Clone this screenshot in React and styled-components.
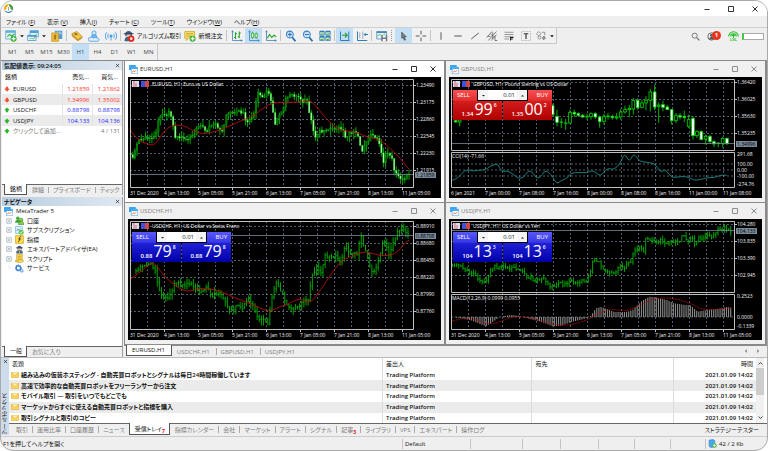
import React from 'react'
import styled, { createGlobalStyle, css } from 'styled-components';

const GlobalStyle = createGlobalStyle`
  * { box-sizing: border-box; }
  body {
    margin: 0;
    background: #fff;
    color: #111;
    font-family: "Open Sans", "Noto Sans CJK JP", sans-serif;
    font-size: 6px;
    line-height: 8px;
    font-feature-settings: "palt";
  }
  button, input {
    font: inherit;
    color: inherit;
    font-feature-settings: inherit;
    padding: 0;
    margin: 0;
    border: 0;
    background: none;
  }
  a { color: inherit; text-decoration: none; }
  svg { display: block; flex: none; }
  table { border-collapse: collapse; }
`;

const Frame = styled.div`
  display: flex;
  flex-direction: column;
  min-height: 100vh;
  border: 1px solid #a9a9a9;
  border-radius: 13px;
  background: #efefef;
  overflow: hidden;
`;

const TitleBar = styled.header`
  display: flex;
  align-items: center;
  justify-content: space-between;
  height: 15px;
  padding: 0 6px 0 2px;
  background: #fff;
`;

const WindowControls = styled.div`
  display: flex;
  gap: ${({ $gap }) => $gap || '12px'};
  color: ${({ $muted }) => ($muted ? '#8c8c8c' : '#333')};
`;

const ControlButton = styled.button`
  display: grid;
  place-items: center;
  width: 12px;
  height: 12px;
`;

const MenuBar = styled.nav`
  display: flex;
  gap: 12px;
  align-items: center;
  height: 12px;
  padding: 0 5px;
  border-bottom: 1px solid #cfcfcf;
`;

const ToolRow = styled.div`
  display: flex;
  justify-content: space-between;
  height: 16px;
`;

const ToolBar = styled.div`
  display: flex;
  align-items: stretch;
  padding-left: 3px;
  border: solid #c8c8c8;
  border-width: 0 1px 1px 0;
  background: #f1f1f1;
`;

const ToolButton = styled.button`
  display: flex;
  align-items: center;
  justify-content: center;
  gap: 2px;
  flex: none;
  width: ${({ $wide }) => $wide || '17px'};
  background: ${({ $active }) => ($active ? '#c3dff5' : 'none')};
  white-space: nowrap;
`;

const Separator = styled.span`
  width: 1px;
  margin: 2px 1px;
  background: #c4c4c4;
`;

const Handle = styled.span`
  width: 3px;
  margin: 2px 1px;
  border-left: 1px dotted #999;
`;

const StatusIcons = styled.div`
  display: flex;
  align-items: center;
  gap: 3px;
  padding-right: 3px;
`;

const Account = styled.button`
  position: relative;
  width: 18px;
`;

const Badge = styled.span`
  position: absolute;
  right: 4px;
  top: -1px;
  width: 9px;
  height: 9px;
  border-radius: 50%;
  background: #e8341c;
  color: #fff;
  font-weight: 700;
`;

const LevelMark = styled.span`
  display: flex;
  flex-direction: column;
  align-items: center;
  color: #25bd25;
  font-size: 4px;
  font-weight: 700;
  line-height: 4px;
  svg { margin-bottom: -4px; }
`;

const Level = styled.span`
  width: 22px;
  height: 7px;
  border: 1px solid #aaa;
  border-left: 2px solid #3ccb3c;
  background: #fff;
`;

const Periods = styled.div`
  display: flex;
  align-self: flex-start;
  height: 16px;
  padding-left: 3px;
  border-right: 1px solid #c8c8c8;
  color: #444;
`;

const Workspace = styled.main`
  display: grid;
  grid-template-columns: 122px minmax(0, 1fr);
  gap: 1px;
  border-top: 1px solid #8a8a8a;
  flex: 1;
`;

const Sidebar = styled.aside`
  display: flex;
  flex-direction: column;
  gap: 2px;
  padding-left: 1px;
`;

const Panel = styled.section`
  display: flex;
  flex-direction: column;
  border-right: 1px solid #a0a0a0;
  flex: ${({ $grow }) => ($grow ? 1 : '0 0 134px')};
`;

const PanelHead = styled.h2`
  display: flex;
  align-items: center;
  justify-content: space-between;
  height: 9px;
  margin: 0;
  padding: 0 2px;
  background: linear-gradient(90deg, #b9cde0, #dfe8f1);
  font-size: 6px;
  font-weight: 600;
`;

const PanelBody = styled.div`
  flex: 1;
  background: #fff;
`;

const Tabs = styled.div`
  display: flex;
  align-items: stretch;
  height: ${({ $height }) => $height || '11px'};
  padding-left: 2px;
  border-top: ${({ $line }) => ($line ? '1px solid #666' : '0')};
  color: #7c7c7c;
`;

const Tab = styled.button`
  position: relative;
  padding: 0 4px 0 5px;
  white-space: nowrap;
  ${({ $active }) => $active ? css`
    background: #fff;
    color: #111;
    border: solid #555;
    border-width: 0 1px 1px;
    margin-top: -1px;
  ` : css`
    & + &::before {
      content: "";
      position: absolute;
      left: 0;
      top: 2px;
      bottom: 2px;
      border-left: 1px solid #aaa;
    }
  `}
`;

const Strategy = styled.button`
  margin-left: auto;
  padding-right: 8px;
  color: #222;
`;

const Count = styled.sub`
  color: #f00;
  font-size: 5px;
  font-weight: 700;
  line-height: 0;
`;

const QuoteTable = styled.table`
  width: 100%;
  table-layout: fixed;
  th { height: 14px; padding: 0 3px; font-weight: 400; text-align: right; }
  th:first-child { width: 60px; text-align: left; }
  th:last-child { padding-right: 4px; }
`;

const Quote = styled.tr`
  height: 10px;
  color: ${({ $color }) => $color || '#777'};
  &:nth-child(even) { height: 11px; background: #ebebeb; }
  td { padding: 0 2px; text-align: right; border-left: 1px solid #e4e4e4; }
  td:first-child { text-align: left; border: 0; }
  &:last-child td { border: 0; }
`;

const Symbol = styled.span`
  display: flex;
  align-items: center;
  gap: ${({ $gap }) => $gap || '3px'};
  color: ${({ $muted }) => ($muted ? '#777' : '#111')};
  white-space: nowrap;
`;

const Tree = styled.ul`
  list-style: none;
  margin: 0;
  padding: 0 2px;
`;

const TreeItem = styled.li`
  display: flex;
  align-items: center;
  gap: 3px;
  height: 10px;
  padding-left: ${({ $root }) => ($root ? '0' : '2px')};
  &:nth-child(even) { height: 9px; }
`;

const Desktop = styled.div`
  display: flex;
  flex-direction: column;
  background: #8a8a8a;
`;

const WindowGrid = styled.div`
  display: grid;
  grid-template-columns: 1fr 1fr;
  gap: 1px 2px;
  padding: 0 2px 2px 1px;
`;

const ChartWindow = styled.section`
  padding: 0 3px 4px;
  background: ${({ $active }) => ($active ? '#fff' : '#f0f0f0')};
`;

const ChartHead = styled.div`
  display: flex;
  align-items: center;
  justify-content: space-between;
  height: 16px;
  padding: 0 2px 0 1px;
  color: ${({ $active }) => ($active ? '#333' : '#808080')};
`;

const ChartName = styled.span`
  display: flex;
  align-items: center;
  gap: 2px;
`;

const ChartBody = styled.div`
  position: relative;
  background: #000;
`;

const ChartSvg = styled.svg`
  width: 100%;
  font-size: 5px;
  fill: #f4f4f4;
`;

const TradePanel = styled.div`
  position: absolute;
  left: 4px;
  top: 13px;
  display: flex;
  gap: 1px;
  color: #fff;
`;

const TradeButton = styled.button`
  display: flex;
  flex-direction: column;
  width: 49px;
  height: 30px;
  padding: 1px 4px;
  align-items: ${({ $right }) => ($right ? 'flex-end' : 'flex-start')};
  background: ${({ $red }) => $red
    ? 'linear-gradient(#fa5050, #e23030 34%, #d41c1c 38%, #b00000)'
    : 'linear-gradient(#5858fa, #3838e6 34%, #2020d8 38%, #0000a8)'};
`;

const TradeLabel = styled.span`
  line-height: 9px;
`;

const TradePrice = styled.span`
  display: flex;
  align-items: flex-end;
  align-self: center;
  gap: 1px;
  padding-left: 3px;
  font-weight: 600;
  b { font-size: 16px; line-height: 18px; font-weight: 400; }
  sup { align-self: flex-start; line-height: 11px; }
`;

const Volume = styled.div`
  position: absolute;
  left: 24px;
  top: 0;
  display: flex;
  width: 51px;
  height: 11px;
  background: #f4f4f4;
  border: solid #000;
  border-width: 0 1px 1px;
  color: #222;
  button { width: 10px; display: grid; place-items: center; }
  input { width: 29px; background: #fff; text-align: right; padding-right: 2px; }
`;

const MdiTabs = styled(Tabs)`
  flex: 1;
  background: #efefef;
  align-items: flex-start;
  ${Tab} { height: 11px; padding: 0 6px 0 5px; }
`;

const Arrows = styled.span`
  display: flex;
  gap: 6px;
  margin: 2px 6px 0 auto;
`;

const Toolbox = styled.section`
  display: grid;
  grid-template-columns: 8px minmax(0, 1fr);
  border-top: 1px solid #bbb;
`;

const ToolboxStrip = styled.div`
  display: flex;
  flex-direction: column;
  align-items: center;
  justify-content: space-between;
  padding-top: 1px;
  background: #cddceb;
  span { writing-mode: vertical-rl; transform: rotate(180deg); line-height: 8px; }
`;

const MailArea = styled.div`
  display: flex;
  height: 65px;
  overflow: hidden;
  background: #fff;
`;

const MailTable = styled.table`
  flex: 1;
  width: 100%;
  table-layout: fixed;
  th, td { padding: 0 3px; text-align: left; white-space: nowrap; overflow: hidden; border-left: 1px solid #dcdcdc; }
  th:first-child, td:first-child { border: 0; }
  th:last-child, td:last-child { text-align: right; }
  th { height: 12px; font-weight: 400; }
  td:first-child { padding-left: 2px; }
`;

const Mail = styled.tr`
  height: 10px;
  font-weight: 600;
  &:nth-child(even) { height: 11px; background: #ebebeb; }
`;

const Scrollbar = styled.div`
  display: flex;
  flex-direction: column;
  justify-content: space-between;
  align-items: center;
  width: 8px;
  margin-right: 3px;
  padding: 3px 0;
  background: #f1f1f1;
`;

const Thumb = styled.span`
  width: 8px;
  height: 27px;
  margin: 2px 0 auto;
  background: #cdcdcd;
`;

const StatusBar = styled.footer`
  display: flex;
  align-items: center;
  height: 14px;
  margin-top: 1px;
  border-top: 1px solid #ccc;
`;

const StatusCell = styled.span`
  display: flex;
  align-items: center;
  gap: 2px;
  width: ${({ $width }) => $width};
  flex: ${({ $width }) => ($width ? 'none' : 1)};
  height: 10px;
  padding-left: 2px;
  border-left: ${({ $first }) => ($first ? '0' : '1px solid #c4c4c4')};
`;

// all icons are drawn on a 16 unit square
const icons = {
  logo: <>
    <path d="M8 1a7 7 0 0 0-6 10l4-3 2-7z" fill="#f2b21b" />
    <path d="M8 1a7 7 0 0 1 6 10l-4-3z" fill="#4c9c45" />
    <path d="M2 11a7 7 0 0 0 12 0L8 13z" fill="#2773b8" />
    <path d="M8 4l3 3-1 5H6L5 7z" fill="#fff" />
    <path d="M8 6v5" stroke="#777" />
  </>,
  chart: <>
    <rect x="0" y="0" width="12" height="9" rx="1" fill="#3aa6f0" />
    <rect x="4" y="4" width="11.500" height="11.500" rx="1" fill="#fff" stroke="#2f94e0" />
    <path d="M4 4h11.500v3H4z" fill="#3aa6f0" />
    <path d="M6 13l2-3 2 2 3-3" stroke="#ed6b35" fill="none" strokeWidth="1.600" />
  </>,
  newChart: <>
    <rect x="1" y="1" width="13" height="11" fill="#dff2fb" stroke="#5ba7cf" />
    <path d="M1 1h13v2.500H1z" fill="#5cb2de" />
    <path d="M3 9l3-3 3 2 4-3" stroke="#3caa3c" fill="none" strokeWidth="1.400" />
    <circle cx="11.500" cy="11.500" r="4" fill="#3bb536" />
    <path d="M11.500 9v5M9 11.500h5" stroke="#fff" strokeWidth="1.600" />
  </>,
  profiles: <>
    <rect x="4" y="1" width="11" height="8" fill="#e6f4fc" stroke="#4a9fd4" />
    <path d="M4 1h11v3H4z" fill="#4a9fd4" />
    <rect x="1" y="7" width="11" height="7" fill="#f2faff" stroke="#3f92c9" />
    <path d="M1 7h11v2H1z" fill="#3f92c9" />
    <path d="M3 12l3-1 3 1 4-7" stroke="#39a84a" fill="none" />
  </>,
  money: <>
    <path d="M5 1h10v11H5z" fill="#4d9ed8" />
    <path d="M6 3h8M6 5h8" stroke="#cbe6f8" />
    <path d="M1 4h9v11H1z" fill="#f1bf3d" stroke="#c88f17" />
    <path d="M7.500 7.500c-4-1-4 2-2 2s2 2.500-2 1.500M5.500 6v7" stroke="#8b5f08" fill="none" />
  </>,
  book: <>
    <path d="M1 5l7-3 7 7-6 4z" fill="#f3c64a" stroke="#b9871b" />
    <path d="M1 5v3l8 7 6-4V9l-6 4z" fill="#c4912a" />
    <path d="M4 5l3-1 2 2-3 1z" fill="#8a6210" />
  </>,
  cloud: <>
    <circle cx="8" cy="4" r="2.800" fill="#cfe7fd" stroke="#3e95e2" />
    <path d="M5 7h6l1 4H4z" fill="#7dbdf8" stroke="#3e95e2" />
    <path d="M3 15a2 2 0 0 1 0-5c2-1 3 0 4 1 2-2 5-1 5 0 4 0 3 4 1 4z" fill="#ddeefd" stroke="#3e95e2" />
  </>,
  signal: <g fill="none" stroke="#4d9ee3" strokeWidth="1.300">
    <circle cx="8" cy="8" r="1.500" fill="#2f7bc8" />
    <path d="M5 5a4 4 0 0 0 0 6M11 5a4 4 0 0 1 0 6M2.500 3a7 7 0 0 0 0 10M13.500 3a7 7 0 0 1 0 10" />
    <path d="M8 10v4" />
  </g>,
  algo: <>
    <path d="M3 5c0-5 9-5 9 0v3H3z" fill="#3d5a80" />
    <path d="M1 5h13" stroke="#2c3e55" strokeWidth="1.500" />
    <path d="M2 15c0-5 3-7 6-6l4 6z" fill="#48617f" />
    <path d="M5 6h5v3H5z" fill="#f0c79a" />
    <circle cx="11" cy="11.500" r="4.200" fill="#dd2b22" />
    <path d="M9.500 10h3v3h-3z" fill="#fff" />
  </>,
  order: <>
    <path d="M1 2h13v9H6l-3 3v-3H1z" fill="#f7dd69" stroke="#c9a227" />
    <path d="M3 5h9M3 8h7" stroke="#b38e20" />
    <circle cx="11.500" cy="11.500" r="4" fill="#3bb536" />
    <path d="M11.500 9v5M9 11.500h5" stroke="#fff" strokeWidth="1.600" />
  </>,
  bars: <>
    <path d="M2 1v13h13M1 3l1-2 1 2M13 13l2 1-2 1" stroke="#3478b8" fill="none" />
    <path d="M6 3v9M4 10h2M6 5h2M11 2v9M9 9h2M11 4h2" stroke="#26a62a" strokeWidth="1.500" />
  </>,
  candles: <>
    <path d="M2 1v13h13M1 3l1-2 1 2M13 13l2 1-2 1" stroke="#3478b8" fill="none" />
    <path d="M6 2v10M11 3v9" stroke="#26a62a" />
    <path d="M4.500 4h3v6h-3zM9.500 5h3v5h-3z" fill="#d9f7d9" stroke="#26a62a" />
  </>,
  line: <>
    <path d="M2 1v13h13M1 3l1-2 1 2M13 13l2 1-2 1" stroke="#3478b8" fill="none" />
    <path d="M3 11l3-5 3 4 3-3 3 2" stroke="#26a62a" fill="none" strokeWidth="1.500" />
  </>,
  zoomIn: <>
    <path d="M9 9l5 6" stroke="#2b6cb0" strokeWidth="2.500" />
    <circle cx="6.500" cy="6" r="4.500" fill="#c6e2fc" stroke="#3b82c8" strokeWidth="1.400" />
    <path d="M4 6h5M6.500 3.500v5" stroke="#2b6cb0" strokeWidth="1.300" />
  </>,
  zoomOut: <>
    <path d="M9 9l5 6" stroke="#2b6cb0" strokeWidth="2.500" />
    <circle cx="6.500" cy="6" r="4.500" fill="#c6e2fc" stroke="#3b82c8" strokeWidth="1.400" />
    <path d="M4 6h5" stroke="#2b6cb0" strokeWidth="1.300" />
  </>,
  tile: <>
    <path d="M1 2h6v5H1zM9 2h6v5H9zM1 9h6v5H1zM9 9h6v5H9z" fill="#d5f2cf" stroke="#2e79b9" />
    <path d="M1 2h6M9 2h6M1 9h6M9 9h6" stroke="#2e79b9" strokeWidth="2" />
    <path d="M2 6l4-1M10 6l4-1M2 13l4-1M10 13l4-1" stroke="#35ab35" strokeWidth="1.300" />
  </>,
  scroll: <>
    <path d="M2 2v12h12M13 2v12" stroke="#2e79b9" fill="none" strokeWidth="1.300" />
    <path d="M4 7h7M8 4l3 3-3 3" stroke="#2aa12e" fill="none" strokeWidth="1.500" />
  </>,
  shift: <>
    <path d="M2 2v12h13" stroke="#2e79b9" fill="none" strokeWidth="1.300" />
    <path d="M5 3v8M9 2v10" stroke="#7e9ab3" />
    <path d="M11 6h5M13 4l-2 2 2 2" stroke="#2e79b9" fill="none" strokeWidth="1.300" />
  </>,
  template: <>
    <path d="M1 2h13v10H1z" fill="#e6f3fa" stroke="#4288ba" />
    <path d="M1 3h13" stroke="#4288ba" strokeWidth="2" />
    <path d="M2 8l3-2 3 2 4-3" stroke="#35ab35" fill="none" />
    <path d="M7 7h8v8H7z" fill="#6b7683" />
    <path d="M9 7h4v3H9zM9 12h4v3H9z" fill="#fff" />
  </>,
  cursor: <path d="M5 3l6 6H8l2 4-1.500.6L6.500 9.500 5 11z" fill="#888" stroke="#444" />,
  cross: <path d="M8 1v5M8 10v5M1 8h5M10 8h5" stroke="#555" strokeWidth="1.300" />,
  vline: <path d="M8 3v10" stroke="#555" strokeWidth="1.300" />,
  hline: <path d="M3 8h10" stroke="#555" strokeWidth="1.300" />,
  trend: <path d="M3 12l10-8" stroke="#555" strokeWidth="1.300" />,
  channel: <path d="M1 10l7-8M3 14l11-12M7 14l7-8M2 8l4 1M6 5l4 4M9 3v9M12 8v6h3" stroke="#555" fill="none" />,
  fibo: <>
    <path d="M2 3h12M2 6h12M2 9h12M2 12h6" stroke="#777" />
    <path d="M10 9v5M10 10h4M10 12h3" stroke="#222" fill="none" strokeWidth="1.400" />
  </>,
  text: <>
    <path d="M2 2h12v12H2z" fill="none" stroke="#999" strokeDasharray="1 1" />
    <path d="M5 5h6M8 5v7" stroke="#333" strokeWidth="1.600" />
  </>,
  shapes: <g stroke="#777">
    <path d="M2 5l3-3 3 3-3 3zM9 3h4v4" fill="none" />
    <circle cx="6" cy="10" r="2" fill="none" />
    <path d="M10 10l2-2 2 3-3 2z" fill="#999" />
  </g>,
  search: <g fill="none" stroke="#666">
    <circle cx="6.500" cy="6.500" r="4.500" strokeWidth="1.500" />
    <path d="M10 10l5 5" strokeWidth="2" />
  </g>,
  user: <>
    <circle cx="8" cy="8" r="6.500" fill="#eee" stroke="#555" strokeWidth="1.500" />
    <circle cx="8" cy="6" r="2.500" fill="#555" />
    <path d="M4 12c1-4 7-4 8 0-2 2-6 2-8 0z" fill="#555" />
  </>,
  level: <g fill="none" stroke="#25bd25" strokeWidth="1.600">
    <path d="M1 8a7 7 0 0 1 14 0M4 8a4 4 0 0 1 8 0" />
    <path d="M8 10V5M6 7l2-2 2 2" />
  </g>,
  down: <path d="M8 15L1 8l4-2V2h6v4l4 2z" fill="#f4542f" />,
  up: <path d="M8 1l7 7-4 2v4H5v-4L1 8z" fill="#2db62c" />,
  accounts: <>
    <circle cx="5" cy="4" r="3" fill="#3aa635" />
    <path d="M0 12c0-7 10-7 10 0z" fill="#3aa635" />
    <circle cx="11" cy="7" r="3" fill="#8ed04b" stroke="#2b7b27" />
    <path d="M6 15c0-7 10-7 10 0z" fill="#8ed04b" stroke="#2b7b27" />
  </>,
  subscribe: <>
    <path d="M1 1h12v12H1z" fill="#e3f4fd" stroke="#4ba3d8" />
    <path d="M3 9l2-4 2 3 3-4" stroke="#3478b8" fill="none" />
    <circle cx="11" cy="11" r="4.500" fill="#5cc552" />
    <path d="M8.500 11l2 2 3-4" stroke="#fff" fill="none" strokeWidth="1.400" />
  </>,
  indicator: <>
    <path d="M1 1h14v14H1z" fill="#ffd94a" stroke="#c2940f" />
    <path d="M11 3c-3-1-3 2-3 4s-1 6-3 5M6 7h5" stroke="#333" fill="none" strokeWidth="1.400" />
  </>,
  expert: <>
    <path d="M4 5c0-5 8-5 8 0v3H4z" fill="#3d5a80" />
    <path d="M2 5h12" stroke="#2c3e55" strokeWidth="1.500" />
    <path d="M5 6h6v3H5z" fill="#f0c79a" />
    <path d="M2 15c0-5 3-6 6-6s6 1 6 6z" fill="#48617f" />
    <path d="M8 10v4" stroke="#f3c64a" strokeWidth="1.500" />
  </>,
  script: <>
    <path d="M3 1h10v9H6v4H1v-3h2z" fill="#f8d558" stroke="#c2940f" />
    <path d="M5 4h6M5 7h6" stroke="#b38e20" />
    <path d="M6 11h9c0 3-1 4-3 4H5c1-1 1-2 1-4z" fill="#ffe68a" stroke="#c2940f" />
  </>,
  service: <>
    <circle cx="6" cy="7" r="4" fill="none" stroke="#3e83d0" strokeWidth="2.500" />
    <circle cx="6" cy="7" r="5.500" fill="none" stroke="#3e83d0" strokeDasharray="2 2" strokeWidth="1.500" />
    <circle cx="12" cy="12" r="2.300" fill="none" stroke="#6fa7e4" strokeWidth="2" />
  </>,
  mail: <>
    <path d="M1 3h14v10H1z" fill="#fbd55c" stroke="#d9a324" />
    <path d="M1 3l7 6 7-6" fill="#fff2b8" stroke="#d9a324" />
  </>,
  link: <>
    <path d="M2 2l7-1 3 2v11l-7 1-3-2z" fill="#4aa8ee" stroke="#2377bd" />
    <circle cx="11.500" cy="11.500" r="4" fill="#58b947" />
    <path d="M11.500 9v5M9 11.500h5" stroke="#fff" strokeWidth="1.400" />
  </>,
  plus: <path d="M2 2h12v12H2zM5 8h6M8 5v6" stroke="#7d8ea3" fill="#fff" strokeWidth="1.500" />,
  branch: <path d="M8-4V8h8" stroke="#aaa" fill="none" strokeDasharray="2 2" />,
  minimize: <path d="M3 9h10" stroke="currentColor" strokeWidth="2" />,
  maximize: <path d="M3 3h10v10H3z" stroke="currentColor" fill="none" strokeWidth="2" />,
  close: <path d="M3 3l10 10M13 3L3 13" stroke="currentColor" strokeWidth="2" />,
  caretDown: <path d="M3 6h10l-5 5z" fill="currentColor" />,
  caretUp: <path d="M3 11h10L8 6z" fill="currentColor" />,
  caretLeft: <path d="M10 3v10L5 8z" fill="currentColor" />,
  caretRight: <path d="M6 3v10l5-5z" fill="currentColor" />,
  chevronUp: <path d="M2 11l6-6 6 6" stroke="currentColor" fill="none" strokeWidth="2.500" />,
  chevronDown: <path d="M2 5l6 6 6-6" stroke="currentColor" fill="none" strokeWidth="2.500" />,
};

const Icon = ({ name, size = 12 }) => (
  <svg width={size} height={size} viewBox="0 0 16 16" aria-hidden="true">{icons[name]}</svg>
);

const menus = [['ファイル ', 'F'], ['表示 ', 'V'], ['挿入', 'I'], ['チャート ', 'C'], ['ツール', 'T'], ['ウインドウ', 'W'], ['ヘルプ', 'H']];
const periods = ['M1', 'M5', 'M15', 'M30', 'H1', 'H4', 'D1', 'W1', 'MN'];

const tools = [
  ['newChart', 'caret'], ['profiles', 'caret'], ['money'], '|',
  ['book'], ['cloud'], ['signal'], '|',
  ['algo', 'アルゴリズム取引', '60px'], ['order', '新規注文', '43px'], '|',
  ['bars'], ['candles', 'on'], ['line'], '|',
  ['zoomIn'], ['zoomOut'], ['tile'], '|',
  ['scroll', 'on'], ['shift'], '|', ['template'], ':',
  ['cursor', 'on'], ['cross'], '|',
  ['vline'], ['hline'], ['trend'], ['channel'], ['fibo'], ['text'], ['shapes', 'caret'],
];

const quotes = [
  ['EURUSD', '1.21859', '1.21862', false],
  ['GBPUSD', '1.34996', '1.35002', false],
  ['USDCHF', '0.88798', '0.88798', true],
  ['USDJPY', '104.133', '104.136', true],
];

const tree = [
  ['accounts', '口座'], ['subscribe', 'サブスクリプション'], ['indicator', '指標'],
  ['expert', 'エキスパートアドバイザ(EA)'], ['script', 'スクリプト'], ['service', 'サービス'],
];

const mails = [
  '組み込みの仮装ホスティング - 自動売買ロボットとシグナルは毎日24時間稼働しています',
  '高速で効率的な自動売買ロボットをフリーランサーから注文',
  'モバイル取引 — 取引をいつでもどこでも',
  'マーケットからすぐに使える自動売買ロボットと指標を購入',
  '取引シグナルと取引のコピー',
];

const toolboxTabs = [
  ['取引'], ['運用比率'], ['口座履歴'], ['ニュース'], ['受信トレイ', 7], ['指標カレンダー'], ['会社'], ['マーケット'],
  ['アラート'], ['シグナル'], ['記事', 3], ['ライブラリ'], ['VPS'], ['エキスパート'], ['操作ログ'],
];

// chart series are stored in thirds of a chart unit, as "x,y x,y ..."
const parse = (s, left) => s.split(' ').map((p) => {
  const [x, y] = p.split(',').map(Number);
  return [(x - left) / 3, (y - 52) / 3];
});

const at = (pts, x) => {
  const i = pts.findIndex((p) => p[0] >= x);
  if (i < 1) return i === 0 ? pts[0][1] : pts[pts.length - 1][1];
  const [x0, y0] = pts[i - 1];
  const [x1, y1] = pts[i];
  return y0 + ((y1 - y0) * (x - x0)) / (x1 - x0);
};

const noise = (n) => {
  const v = Math.sin(n * 127.1) * 43758.5453;
  return v - Math.floor(v);
};

// quadratic curve through the middle of each segment
const smooth = (pts) => {
  const last = pts.length - 1;
  let d = `M${pts[0]}`;
  for (let i = 1; i < last; i += 1) {
    const [x, y] = pts[i];
    d += ` Q${x} ${y} ${(x + pts[i + 1][0]) / 2} ${(y + pts[i + 1][1]) / 2}`;
  }
  return `${d} L${pts[last]}`;
};

const STEP = 2.125;

const Bars = ({ data, left, candles, wick = 4 }) => {
  const pts = parse(data, left);
  const items = [];
  let open = pts[0][1];
  let i = 0;
  for (let x = pts[0][0]; x <= pts[pts.length - 1][0] + 0.5; x += STEP) {
    const close = at(pts, x) + (noise(i + 3) - 0.5) * 4;
    const high = Math.min(open, close) - noise(i + 50) * wick;
    const low = Math.max(open, close) + noise(i + 90) * wick;
    items.push({ x, open, close, high, low });
    open = close;
    i += 1;
  }
  return items.map(({ x, open: o, close: c, high, low }) => (
    <g key={x}>
      <path d={`M${x} ${high}V${low}`} stroke="#00b400" strokeWidth="0.9" />
      {candles
        ? <rect x={x - 0.8} y={Math.min(o, c)} width="1.6" height={Math.max(0.6, Math.abs(o - c))} fill={c > o ? '#a5f5a5' : '#006a00'} stroke="#00b400" strokeWidth="0.3" />
        : <path d={`M${x - 1} ${o}H${x}M${x} ${c}H${x + 1}`} stroke="#00b400" strokeWidth="0.7" />}
    </g>
  ));
};

const Curve = ({ data, left, color = '#b80c0c', dash }) => (
  <path d={smooth(parse(data, left))} stroke={color} strokeWidth="0.9" strokeDasharray={dash} fill="none" />
);

const Histogram = ({ data, left }) => {
  const pts = parse(data, left);
  const zero = 98;
  let d = '';
  for (let x = pts[0][0]; x < 283; x += STEP) d += `M${x} ${zero}V${at(pts, x)}`;
  return <path d={d} stroke="#8a8a8a" strokeWidth="1.1" />;
};

// x, high, low, body top, body bottom, falling
const poundCandles = [
  [34, 180, 188, 183, 187, 1], [46, 180, 200, 181, 187, 0],
  [325, 132, 168, 138, 165, 1], [338, 150, 200, 170, 188, 1], [351, 175, 205, 187, 188, 0], [364, 178, 210, 190, 191, 0],
  [377, 150, 192, 158, 190, 0], [390, 150, 172, 158, 163, 1], [402, 158, 172, 162, 167, 1], [415, 163, 174, 167, 172, 1],
  [428, 162, 180, 171, 172, 0], [440, 158, 180, 162, 171, 0], [453, 158, 178, 162, 172, 1], [466, 168, 204, 172, 186, 1],
  [479, 162, 195, 170, 185, 0], [491, 160, 180, 169, 171, 0], [504, 165, 180, 170, 174, 1], [517, 160, 180, 172, 175, 0],
  [529, 148, 180, 157, 172, 0], [542, 138, 162, 150, 157, 0], [555, 136, 172, 146, 150, 0], [567, 115, 165, 122, 148, 0],
  [580, 116, 150, 122, 144, 1], [593, 120, 146, 130, 143, 0], [605, 110, 152, 122, 130, 0], [618, 88, 155, 97, 122, 0],
  [631, 75, 152, 97, 142, 1], [643, 128, 190, 136, 140, 0], [656, 123, 155, 135, 143, 1], [669, 136, 150, 142, 150, 1],
  [682, 148, 195, 150, 183, 1], [695, 160, 190, 168, 183, 0], [707, 160, 180, 168, 172, 1], [720, 153, 188, 170, 174, 1],
  [733, 165, 205, 180, 200, 0], [746, 170, 240, 176, 228, 1], [758, 212, 235, 216, 228, 0], [771, 212, 242, 216, 240, 1],
  [784, 225, 255, 230, 238, 0], [797, 226, 252, 230, 246, 1], [809, 240, 262, 246, 253, 1], [822, 248, 262, 250, 252, 0],
  [835, 232, 264, 236, 251, 0], [848, 234, 256, 236, 252, 1],
];

const PoundCandles = () => poundCandles.map(([x, h, l, t, b, down]) => (
  <g key={x} transform="translate(-4.667 -17.333) scale(0.3333)" stroke="#00d200" strokeWidth="2.500">
    <path d={`M${x} ${h}V${l}`} />
    <rect x={x - 4} y={t} width="8" height={b - t} fill={down ? '#fff' : '#000'} />
  </g>
));

const decemberDates = ['31 Dec 2020', '4 Jan 13:00', '5 Jan 05:00', '5 Jan 21:00', '6 Jan 13:00', '7 Jan 05:00', '7 Jan 21:00', '8 Jan 13:00', '11 Jan 05:00'];
const januaryDates = ['6 Jan 2021', '7 Jan 00:00', '7 Jan 08:00', '7 Jan 16:00', '8 Jan 00:00', '8 Jan 08:00', '8 Jan 16:00', '11 Jan 00:00', '11 Jan 08:00'];

const charts = [
  {
    name: 'EURUSD,H1', title: 'EURUSD, H1:  Euro vs US Dollar', active: true, dates: decemberDates,
    prices: ['1.23490', '1.23175', '1.22860', '1.22545', '1.22230', '1.21915'], first: 8, current: ['1.21859', 97],
    draw: <>
      <Bars left={18} candles wick={6} data="26,282 34,292 42,260 50,240 60,245 75,235 90,238 102,215 110,180 120,160 135,165 143,155 150,185 158,228 175,235 190,240 205,235 215,228 225,205 240,203 255,215 268,195 280,190 292,210 300,215 310,180 316,158 330,162 350,158 362,155 375,190 388,170 395,160 403,120 407,95 415,110 428,105 437,90 443,110 452,155 460,195 470,170 485,140 492,115 510,100 525,112 545,125 555,125 563,160 572,205 582,238 595,210 605,218 625,210 645,205 665,210 672,240 682,220 700,215 710,230 718,285 730,250 745,225 755,225 765,240 775,260 783,320 790,290 800,280 810,300 818,340 830,350 843,362 852,350 862,338" />
      <Curve left={18} data="24,210 45,240 75,253 92,257 105,248 125,215 148,197 180,196 205,208 230,221 260,222 310,205 370,178 400,165 440,132 480,127 530,129 555,120 575,130 610,175 650,213 700,215 740,235 770,237 800,262 830,290 862,330" />
    </>,
  },
  {
    name: 'GBPUSD,H1', title: 'GBPUSD, H1:  Pound Sterling vs US Dollar', dates: januaryDates, red: true,
    prices: ['1.36420', '1.36025', '1.35630', '1.35235'], first: 5, current: ['1.34996', 66],
    sell: ['1.34', '99', '6'], buy: ['1.35', '00', '2'],
    indicator: 'CCI(14) -71.66', levels: [87, 93, 99], marks: [['291.68', 77], ['100.00', 87], ['0.00', 93], ['-100.00', 99], ['-274.76', 107]],
    draw: <>
      <PoundCandles />
      <Curve left={14} color="#1f8a8a" data="22,362 32,360 45,350 60,333 75,330 85,335 105,331 125,331 135,320 150,315 160,312 172,336 185,334 195,336 210,347 222,356 237,355 250,335 262,334 275,355 288,354 300,334 312,336 325,352 338,374 350,362 365,358 378,343 390,338 430,340 440,332 455,338 467,350 480,337 492,325 505,330 518,322 528,310 541,280 555,308 568,280 583,302 595,307 632,310 645,335 655,335 665,330 682,356 707,350 735,352 747,362 770,360 785,354 810,354 830,346 847,347" />
    </>,
  },
  {
    name: 'USDCHF,H1', title: 'USDCHF, H1:  US Dollar vs Swiss Franc', dates: decemberDates,
    prices: ['0.88910', '0.88680', '0.88450', '0.88220', '0.87990', '0.87760'], first: 7, current: ['0.88798', 16],
    sell: ['0.88', '79', '8'], buy: ['0.88', '79', '8'],
    draw: <>
      <Bars left={18} wick={6} data="42,205 55,195 70,192 85,190 98,200 108,255 120,280 135,290 148,270 158,245 175,248 190,252 210,245 225,270 245,270 255,260 270,285 290,270 305,290 318,318 335,320 350,312 362,325 375,290 390,305 400,330 410,350 425,352 437,365 445,310 460,245 475,265 490,300 510,325 520,315 545,300 560,290 570,225 582,195 598,215 610,160 625,170 640,165 655,180 670,135 685,155 705,155 717,100 727,140 738,175 752,215 765,195 780,130 790,125 800,165 815,120 828,90 840,80 852,90 862,105" />
      <Curve left={18} data="24,233 50,215 88,183 100,187 130,228 165,255 195,272 225,260 260,260 300,270 340,290 385,305 440,332 480,312 500,307 530,290 545,296 565,306 600,260 650,182 690,162 732,147 770,163 820,160 850,122 862,115" />
    </>,
  },
  {
    name: 'USDJPY,H1', title: 'USDJPY, H1:  US Dollar vs Yen', dates: decemberDates,
    prices: ['104.280', '103.835', '103.390', '102.945'], first: 5, current: ['104.133', 11],
    sell: ['104', '13', '3'], buy: ['104', '13', '6'],
    indicator: 'MACD(12,26,9) 0.0999 0.0955', levels: [98], marks: [['0.2523', 77], ['0.0000', 98], ['-0.1339', 107]],
    draw: <>
      <Bars left={14} wick={4} data="24,188 45,190 60,210 80,215 95,218 110,242 125,235 140,205 155,195 180,198 215,200 230,212 250,228 275,235 300,228 312,250 330,255 345,245 360,250 375,235 400,242 425,235 435,220 445,185 455,175 470,192 490,212 510,210 525,195 545,195 560,175 572,145 585,138 597,150 605,110 620,120 650,118 665,125 680,118 705,120 715,100 730,118 742,105 750,130 760,110 775,115 790,100 805,108 820,85 840,80 862,87" />
      <Histogram left={14} data="24,346 50,350 80,356 125,374 150,358 165,346 200,340 225,343 250,350 290,360 325,374 350,372 385,360 420,352 440,342 455,320 470,316 495,325 510,331 545,331 565,325 590,300 615,285 635,287 665,294 690,305 740,312 760,330 790,325 830,320 850,315 862,320" />
      <Curve left={14} dash="2 1" data="24,358 60,348 90,352 130,368 165,362 200,345 240,345 290,356 340,372 380,370 430,355 460,335 500,322 540,328 570,320 610,298 645,288 690,290 740,305 770,324 820,324 862,318" />
    </>,
  },
];

const Controls = ({ muted, gap }) => (
  <WindowControls $muted={muted} $gap={gap}>
    <ControlButton aria-label="最小化"><Icon name="minimize" size={8} /></ControlButton>
    <ControlButton aria-label="最大化"><Icon name="maximize" size={8} /></ControlButton>
    <ControlButton aria-label="閉じる"><Icon name="close" size={8} /></ControlButton>
  </WindowControls>
);

const Chart = ({ chart }) => {
  const { title, prices, first, current, dates, indicator, levels = [], marks = [], draw } = chart;
  const bottom = indicator ? 73 : 110;
  const columns = Array.from({ length: 16 }, (_, i) => 19.5 + i * 17);
  return (
    <ChartSvg viewBox="0 0 313 121" role="img" aria-label={title}>
      <g stroke="#66778a" strokeWidth="0.8" strokeDasharray="2 2">
        {columns.map((x) => <path key={x} d={`M${x} 2V110`} />)}
        {prices.map((p, i) => <path key={p} d={`M2 ${first + 0.5 + i * 17}H285`} />)}
        {levels.map((y) => <path key={y} d={`M2 ${y}H285`} />)}
      </g>
      {draw}
      <path d={`M2 ${current[1] + 0.5}H285`} stroke="#778899" strokeWidth="0.8" />
      <g stroke="#c0c0c0" fill="none">
        <path d={`M2.5 2.5H285.5V${bottom + 0.5}H2.500z`} />
        {indicator && <path d="M2.500 75.500H285.500V110.500H2.500z" />}
        {dates.slice(1).map((d, i) => <path key={d} d={`M${36.5 + i * 34} 110v3`} />)}
        {prices.map((p, i) => <path key={p} d={`M285 ${first + 0.5 + i * 17}h3`} />)}
      </g>
      <rect x="4" y="4" width="7" height="6" fill="#d7dcf2" />
      <path d="M6 4v6M8 6v4" stroke="#d66" />
      <rect x="13" y="4" width="4" height="6" fill="#3e50dc" />
      <rect x="17" y="4" width="4" height="6" fill="#d04545" />
      <text x="24" y="9" fill="#fff">{title}</text>
      {indicator && <text x="3" y="81">{indicator}</text>}
      {prices.map((p, i) => <text key={p} x="288" y={first + 2 + i * 17}>{p}</text>)}
      {marks.map(([label, y]) => <text key={label} x="288" y={y + 2}>{label}</text>)}
      <rect x="287" y={current[1] - 2} width="21" height="6" fill="#778899" />
      <text x="288" y={current[1] + 3} fill="#000">{current[0]}</text>
      {dates.map((d, i) => <text key={d} x={2 + i * 34} y="118">{d}</text>)}
    </ChartSvg>
  );
};

const Trade = ({ chart }) => (
  <TradePanel>
    <TradeButton $red={chart.red}>
      <TradeLabel>SELL</TradeLabel>
      <TradePrice>{chart.sell[0]}<b>{chart.sell[1]}</b><sup>{chart.sell[2]}</sup></TradePrice>
    </TradeButton>
    <TradeButton $red={chart.red} $right>
      <TradeLabel>BUY</TradeLabel>
      <TradePrice>{chart.buy[0]}<b>{chart.buy[1]}</b><sup>{chart.buy[2]}</sup></TradePrice>
    </TradeButton>
    <Volume>
      <button aria-label="減らす"><Icon name="caretDown" size={5} /></button>
      <input type="text" defaultValue="0.01" aria-label="数量" />
      <button aria-label="増やす"><Icon name="caretUp" size={5} /></button>
    </Volume>
  </TradePanel>
);

const Tools = () => (
  <ToolRow>
    <ToolBar>
      {tools.map((tool, i) => {
        if (tool === '|') return <Separator key={i} />;
        if (tool === ':') return <Handle key={i} />;
        const [name, extra, wide] = tool;
        return (
          <ToolButton key={i} aria-label={wide ? undefined : name} $active={extra === 'on'} $wide={extra === 'caret' ? '22px' : wide}>
            <Icon name={name} size={12} />
            {extra === 'caret' && <Icon name="caretDown" size={6} />}
            {wide && extra}
          </ToolButton>
        );
      })}
    </ToolBar>
    <StatusIcons>
      <ToolButton aria-label="検索"><Icon name="search" size={9} /></ToolButton>
      <Account aria-label="アカウント"><Icon name="user" size={9} /><Badge>1</Badge></Account>
      <LevelMark><Icon name="level" size={11} />LVL</LevelMark>
      <Level />
    </StatusIcons>
  </ToolRow>
);

const App = () => {
  return (
    <>
      <GlobalStyle />
      <Frame>
        <TitleBar>
          <Icon name="logo" size={11} />
          <Controls />
        </TitleBar>
        <MenuBar>
          {menus.map(([label, letter]) => <a href="#menu" key={letter}>{label}(<u>{letter}</u>)</a>)}
        </MenuBar>
        <Tools />
        <Periods>
          {periods.map((p) => <ToolButton key={p} $active={p === 'H1'}>{p}</ToolButton>)}
        </Periods>

        <Workspace>
          <Sidebar>
            <Panel>
              <PanelHead>気配値表示: 09:24:05<Icon name="close" size={5} /></PanelHead>
              <PanelBody>
                <QuoteTable>
                  <thead>
                    <tr><th>銘柄</th><th>売気...</th><th>買気...</th></tr>
                  </thead>
                  <tbody>
                    {quotes.map(([symbol, bid, ask, up]) => (
                      <Quote key={symbol} $color={up ? '#1c1cff' : '#ff3020'}>
                        <td><Symbol><Icon name={up ? 'up' : 'down'} size={6} />{symbol}</Symbol></td>
                        <td>{bid}</td>
                        <td>{ask}</td>
                      </Quote>
                    ))}
                    <Quote>
                      <td colSpan="2"><Symbol $muted><Icon name="up" size={6} />クリックして追加...</Symbol></td>
                      <td>4 / 131</td>
                    </Quote>
                  </tbody>
                </QuoteTable>
              </PanelBody>
              <Tabs $line>
                <Tab $active>銘柄</Tab><Tab>詳細</Tab><Tab>プライスボード</Tab><Tab>ティック</Tab>
              </Tabs>
            </Panel>
            <Panel $grow>
              <PanelHead>ナビゲータ<Icon name="close" size={5} /></PanelHead>
              <PanelBody>
                <Tree>
                  <TreeItem $root><Icon name="chart" size={9} />MetaTrader 5</TreeItem>
                  {tree.map(([icon, label]) => (
                    <TreeItem key={label}>
                      <Icon name={icon === 'service' ? 'branch' : 'plus'} size={6} />
                      <Icon name={icon} size={9} />{label}
                    </TreeItem>
                  ))}
                </Tree>
              </PanelBody>
              <Tabs $line>
                <Tab $active>一般</Tab><Tab>お気に入り</Tab>
              </Tabs>
            </Panel>
          </Sidebar>

          <Desktop>
            <WindowGrid>
              {charts.map((chart) => (
                <ChartWindow key={chart.name} $active={chart.active}>
                  <ChartHead $active={chart.active}>
                    <ChartName><Icon name="chart" size={9} />{chart.name}</ChartName>
                    <Controls muted={!chart.active} gap="7px" />
                  </ChartHead>
                  <ChartBody>
                    <Chart chart={chart} />
                    {chart.sell && <Trade chart={chart} />}
                  </ChartBody>
                </ChartWindow>
              ))}
            </WindowGrid>
            <MdiTabs>
              {['EURUSD,H1', 'USDCHF,H1', 'GBPUSD,H1', 'USDJPY,H1'].map((name, i) => (
                <Tab key={name} $active={i === 0}>{name}</Tab>
              ))}
              <Arrows><Icon name="caretLeft" size={6} /><Icon name="caretRight" size={6} /></Arrows>
            </MdiTabs>
          </Desktop>
        </Workspace>

        <Toolbox>
          <ToolboxStrip><Icon name="close" size={5} /><span>ツールボックス</span></ToolboxStrip>
          <div>
            <MailArea>
              <MailTable>
                <colgroup><col width="50%" /><col width="20%" /><col width="19%" /><col width="11%" /></colgroup>
                <thead>
                  <tr><th>表題</th><th>差出人</th><th>宛先</th><th>時間</th></tr>
                </thead>
                <tbody>
                  {mails.map((subject) => (
                    <Mail key={subject}>
                      <td><Symbol $gap="2px"><Icon name="mail" size={8} />{subject}</Symbol></td>
                      <td>Trading Platform</td>
                      <td />
                      <td>2021.01.09 14:02</td>
                    </Mail>
                  ))}
                </tbody>
              </MailTable>
              <Scrollbar>
                <Icon name="chevronUp" size={5} />
                <Thumb />
                <Icon name="chevronDown" size={5} />
              </Scrollbar>
            </MailArea>
            <Tabs $line $height="12px">
              {toolboxTabs.map(([label, count]) => (
                <Tab key={label} $active={count === 7}>{label}{count && <Count>{count}</Count>}</Tab>
              ))}
              <Strategy>ストラテジーテスター</Strategy>
            </Tabs>
          </div>
        </Toolbox>

        <StatusBar>
          <StatusCell $first>F1を押してヘルプを開く</StatusCell>
          <StatusCell $width="68px">Default</StatusCell>
          <StatusCell $width="52px" />
          <StatusCell $width="38px" />
          <StatusCell $width="38px" />
          <StatusCell $width="36px" />
          <StatusCell $width="36px" />
          <StatusCell $width="35px" />
          <StatusCell $width="62px"><Icon name="link" size={9} />42 / 2 Kb</StatusCell>
        </StatusBar>
      </Frame>
    </>
  )
}

export default App
